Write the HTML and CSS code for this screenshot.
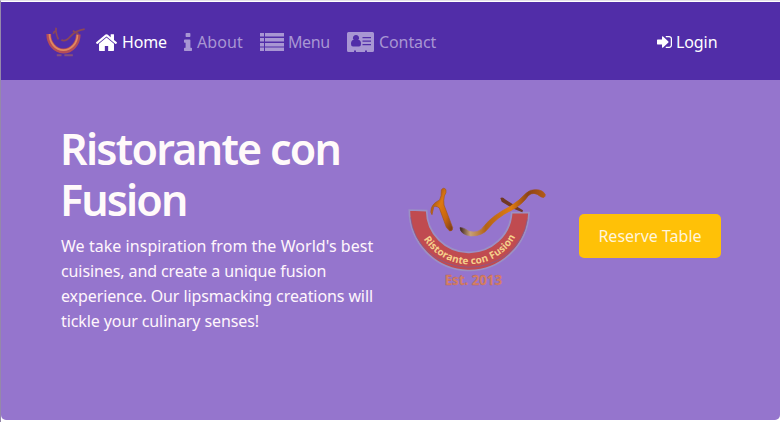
FILE: index.html
```
<!DOCTYPE html>
<html lang="en">
<head>
<meta charset="utf-8">
<title>Ristorante con Fusion</title>
<link rel="stylesheet" href="styles.css">
</head>
<body>
<svg width="0" height="0" class="defs">
  <defs>
    <linearGradient id="wood" x1="0" y1="0" x2="1" y2="1">
      <stop offset="0" stop-color="#6b3420"/><stop offset=".4" stop-color="#de780f"/><stop offset=".7" stop-color="#c76510"/><stop offset="1" stop-color="#713719"/>
    </linearGradient>
    <linearGradient id="fork" x1="180" y1="0" x2="435" y2="0" gradientUnits="userSpaceOnUse">
      <stop offset="0" stop-color="#3e241d"/><stop offset=".12" stop-color="#c7a178"/><stop offset=".3" stop-color="#b46316"/><stop offset=".6" stop-color="#df7b10"/><stop offset=".8" stop-color="#8c4316"/><stop offset="1" stop-color="#b35a16"/>
    </linearGradient>
  </defs>
</svg>
<div class="page">
  <nav class="navbar">
    <svg class="brand" viewBox="0 0 465 345" preserveAspectRatio="none">
      <path d="M50 92A156 170 0 0 0 362 96" fill="none" stroke="#b54d58" stroke-width="50"/>
      <path d="M58 92A148 162 0 0 0 354 96" fill="none" stroke="#e08a60" stroke-width="18"/>
      <path d="M128 28Q120 80 152 145M98 88Q105 65 125 58M184 151Q225 175 280 115T430 42M305 58L365 92" fill="none" stroke="#8c4857" stroke-width="18"/>
      <path d="M135 308H185M215 308H305" stroke="#86507b" stroke-width="20"/>
    </svg>
    <a class="link active"><svg class="i-home" viewBox="89 240 1614 1296" preserveAspectRatio="none"><path d="M1472 992v480q0 26-19 45t-45 19h-384v-384h-256v384h-384q-26 0-45-19t-19-45v-480q0-1 .5-3t.5-3l575-474 575 474q1 2 1 6zm223-69l-62 74q-8 9-21 11h-3q-13 0-21-7l-692-577-692 577q-12 8-24 7-13-2-21-11l-62-74q-8-10-7-23.5t11-21.5l719-599q32-26 76-26t76 26l244 204v-195q0-14 9-23t23-9h192q14 0 23 9t9 23v408l219 182q10 8 11 21.5t-7 23.5z"/></svg><span class="t-home">Home</span></a>
    <a class="link"><svg class="i-info" viewBox="576 128 640 1408" preserveAspectRatio="none"><path d="M1216 1344v128q0 26-19 45t-45 19h-512q-26 0-45-19t-19-45v-128q0-26 19-45t45-19h64v-384h-64q-26 0-45-19t-19-45v-128q0-26 19-45t45-19h384q26 0 45 19t19 45v576h64q26 0 45 19t19 45zm-128-1152v192q0 26-19 45t-45 19h-256q-26 0-45-19t-19-45v-192q0-26 19-45t45-19h256q26 0 45 19t19 45z"/></svg><span class="t-about">About</span></a>
    <a class="link"><svg class="i-list" viewBox="0 0 24 18"><path d="M0 0h4v3.500H0zM5 0h19v3.500H5zM0 5h4v3.500H0zM5 5h19v3.500H5zM0 10h4v3.500H0zM5 10h19v3.500H5zM0 14.500h4V18H0zM5 14.500h19V18H5z"/></svg><span class="t-menu">Menu</span></a>
    <a class="link"><svg class="i-card" viewBox="0 0 27 20"><path fill-rule="evenodd" d="M1.500 0h24Q27 0 27 1.500V18.500Q27 20 25.500 20H20v-1.500h-2V20H9v-1.500H7V20H1.500Q0 20 0 18.500V1.500Q0 0 1.500 0zM9 3a2.900 2.900 0 0 0-2.300 4.900L6.300 8Q4 8.300 4 12q0 2.500 2 2.500h6q2 0 2-2.500 0-3.700-2.300-4l-.4-.1A2.900 2.900 0 0 0 9 3zM15.500 5v1.200H24V5zM15.500 8.500v1.200H24V8.500zM15.500 12v1.200H24V12z"/></svg><span class="t-contact">Contact</span></a>
    <a class="link active login"><svg class="i-login" viewBox="128 256 1536 1280" preserveAspectRatio="none"><path d="M1312 896q0 26-19 45l-544 544q-19 19-45 19t-45-19-19-45v-288h-448q-26 0-45-19t-19-45v-384q0-26 19-45t45-19h448v-288q0-26 19-45t45-19 45 19l544 544q19 19 19 45zm352-352v704q0 119-84.500 203.500t-203.500 84.500h-320q-13 0-22.500-9.500t-9.500-22.500q0-4-1-20t-.5-26.500 3-23.500 10-19.500 20.500-6.500h320q66 0 113-47t47-113v-704q0-66-47-113t-113-47h-312l-11.500-1-11.500-3-8-5.500-7-9-2-13.500q0-4-1-20t-.5-26.500 3-23.500 10-19.500 20.500-6.500h320q119 0 203.500 84.500t84.500 203.500z"/></svg><span class="t-login">Login</span></a>
  </nav>
  <header class="jumbotron">
    <div class="intro">
      <h1><span class="h-one">Ristorante con</span><br><span class="h-two">Fusion</span></h1>
      <p><span class="p-one">We take inspiration from the World's best</span><br><span class="p-two">cuisines, and create a unique fusion</span><br><span class="p-three">experience. Our lipsmacking creations will</span><br><span class="p-four">tickle your culinary senses!</span></p>
    </div>
    <svg class="logo" viewBox="0 0 465 345">
      <path d="M28 90A179.600 182 0 0 0 387 98H335A127.600 126 0 0 1 80 92Z" fill="#c04b50" stroke="#9b91c4" stroke-width="5"/>
      <path d="M32 112A176 164 0 0 0 382 118" fill="none" stroke="#795e9c" stroke-width="2"/>
      <path id="arc" d="M47 93A160 160 0 0 0 367 93" fill="none"/>
      <text class="arc-text"><textPath href="#arc" startOffset="88" textLength="333">Ristorante con Fusion</textPath></text>
      <path d="M124 30Q130 20 138 29Q140 38 133 48Q130 61 132 75L158 143Q159 153 149 153L139 142L118 84Q106 75 101 82L96 104Q90 99 94 85Q99 69 119 60Q125 48 124 30Z" fill="url(#wood)" stroke="#a3541b" stroke-width="2"/>
      <path d="M301 54Q309 50 315 58L369 91L367 97L337 85L305 65Z" fill="#713823"/>
      <path d="M180 143Q190 142 207 154Q237 162 253 137Q278 106 331 79Q359 61 378 40Q390 28 407 29Q429 29 436 44Q435 57 422 50Q401 32 385 47Q365 76 332 92Q292 111 264 146Q248 168 213 168Q181 164 180 143Z" fill="url(#fork)" stroke="url(#fork)" stroke-width="2"/>
      <text class="est" x="134" y="315" textLength="172" lengthAdjust="spacing">Est. 2013</text>
    </svg>
    <a class="reserve"><span>Reserve Table</span></a>
  </header>
</div>
</body>
</html>
```
FILE: styles.css
```
* { box-sizing: border-box; }
body {
  margin: 0;
  height: 422px;
  overflow: hidden;
  background: #fff;
  font: 16px/25px "Noto Sans", "Open Sans", sans-serif;
  color: #fff;
}
.defs { position: absolute; }
.page {
  height: 422px;
  padding-top: 2px;
  border-top: 1px solid #e3e1e8;
  border-left: 1px solid #9588aa;
}
.navbar {
  height: 78px;
  margin-top: -1px;
  padding: 2px 0 0 43px;
  display: flex;
  align-items: center;
  background: #512da8;
}
svg { display: block; flex: none; fill: currentColor; }
.brand { width: 44px; height: 34px; margin-right: 8px; }
.link { display: flex; align-items: center; height: 25px; color: #a896d3; white-space: nowrap; }
.link.active { color: #fff; }
.link span { display: block; }
.i-home { width: 21px; height: 17px; margin-right: 5px; }
.i-info { width: 8px; height: 18px; margin-right: 5px; }
.i-list { width: 24px; height: 18px; margin-right: 4px; }
.i-card { width: 27px; height: 20px; margin-right: 5px; }
.i-login { width: 15px; height: 12px; margin-right: 4px; }
.t-home { width: 62px; letter-spacing: -.2px; }
.t-about { width: 63px; letter-spacing: .1px; }
.t-menu { width: 59px; letter-spacing: -.4px; }
.t-contact { width: 62px; letter-spacing: -.1px; }
.login { margin-left: auto; margin-right: 59px; }
.t-login { width: 45px; letter-spacing: -.1px; }
.jumbotron {
  height: 340px;
  padding: 43px 0 0 60px;
  display: flex;
  align-items: flex-start;
  background: #9575cd;
  border-radius: 0 0 5px 5px;
}
.intro { width: 339px; white-space: nowrap; }
h1 {
  margin: 0 0 9px -1px;
  font-size: 43px;
  line-height: 51px;
  font-weight: 600;
  color: #fffafa;
}
p { margin: 0; color: #fff5fc; }
.h-one { letter-spacing: -1.75px; }
.h-two { letter-spacing: -1.9px; }
.p-one { letter-spacing: .05px; }
.p-two, .p-three, .p-four { letter-spacing: -.1px; }
.logo { width: 155px; height: 115px; margin-top: 57px; }
.arc-text { font: bold 30px "Open Sans", sans-serif; fill: #f6d08b; }
.est { font: bold 40px "Noto Sans", sans-serif; fill: #d88462; stroke: #b85f62; stroke-width: 1; }
.reserve {
  width: 142px;
  height: 44px;
  margin: 91px 0 0 24px;
  border-radius: 5px;
  background: #ffc107;
  color: #fff5db;
  display: flex;
  align-items: center;
  justify-content: center;
}
```
